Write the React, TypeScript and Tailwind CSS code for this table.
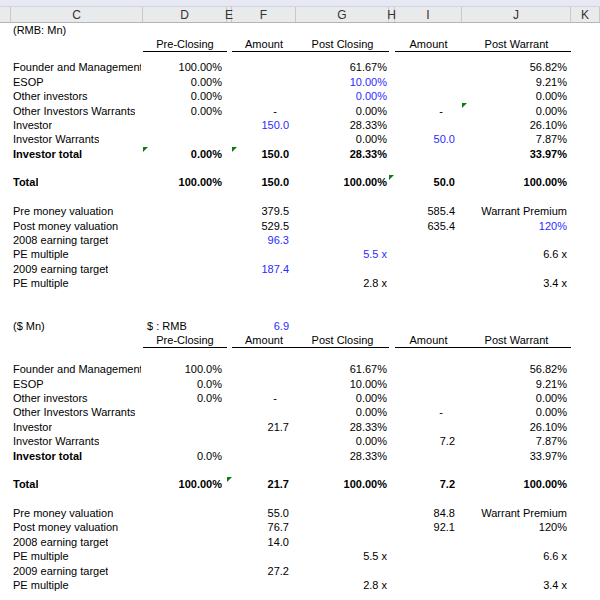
import React from "react";

type Col = "N" | "C" | "D" | "E" | "F" | "G" | "H" | "I" | "J" | "K";

type Cell = {
  t?: string;
  b?: boolean;
  blue?: boolean;
  tri?: boolean;
  al?: "l" | "r" | "c";
  pad?: string;
};

type Row = {
  cells?: Partial<Record<Col, Cell>>;
  h?: string;
  under?: boolean;
  bold?: boolean;
};

const COLS: Col[] = ["N", "C", "D", "E", "F", "G", "H", "I", "J", "K"];
const GRID = "grid grid-cols-[11px_132px_84px_5px_64px_93px_6px_67px_109px_29px]";

// default right padding per column (Excel number formats leave room for ")")
const PAD: Record<Col, string> = {
  N: "",
  C: "pl-[2px]",
  D: "pr-[5px]",
  E: "",
  F: "pr-[7px]",
  G: "pr-[2px]",
  H: "",
  I: "pr-[7px]",
  J: "pr-[4px]",
  K: "",
};

const UNDER: Col[] = ["D", "F", "G", "I", "J"];

const c = (t: string, extra: Partial<Cell> = {}): Cell => ({ t, ...extra });
const blue = (t: string): Cell => ({ t, blue: true });
const dash: Cell = { t: "-", pad: "pr-[19px]" };
const tri: Cell = { tri: true };

const headerRow: Row = {
  under: true,
  cells: {
    D: c("Pre-Closing", { al: "c", pad: "" }),
    F: c("Amount", { al: "c", pad: "" }),
    G: c("Post Closing", { al: "c", pad: "" }),
    I: c("Amount", { al: "c", pad: "" }),
    J: c("Post Warrant", { al: "c", pad: "" }),
  },
};

const blank: Row = {};

const rows: Row[] = [
  { cells: { C: c("(RMB: Mn)") } },
  headerRow,
  { h: "h-[8.55px]" },
  { cells: { C: c("Founder and Management"), D: c("100.00%"), G: c("61.67%"), J: c("56.82%") } },
  { cells: { C: c("ESOP"), D: c("0.00%"), G: blue("10.00%"), J: c("9.21%") } },
  { cells: { C: c("Other investors"), D: c("0.00%"), G: blue("0.00%"), J: c("0.00%") } },
  {
    cells: {
      C: c("Other Investors Warrants"),
      D: c("0.00%"),
      F: dash,
      G: c("0.00%"),
      I: dash,
      J: c("0.00%", { tri: true }),
    },
  },
  { cells: { C: c("Investor"), F: blue("150.0"), G: c("28.33%"), J: c("26.10%") } },
  { cells: { C: c("Investor Warrants"), G: c("0.00%"), I: blue("50.0"), J: c("7.87%") } },
  {
    bold: true,
    cells: {
      C: c("Investor total"),
      D: c("0.00%", { tri: true }),
      F: c("150.0", { tri: true }),
      G: c("28.33%"),
      J: c("33.97%"),
    },
  },
  blank,
  {
    bold: true,
    cells: {
      C: c("Total"),
      D: c("100.00%"),
      F: c("150.0"),
      G: c("100.00%"),
      H: tri,
      I: c("50.0"),
      J: c("100.00%"),
    },
  },
  blank,
  { cells: { C: c("Pre money valuation"), F: c("379.5"), I: c("585.4"), J: c("Warrant Premium") } },
  { cells: { C: c("Post money valuation"), F: c("529.5"), I: c("635.4"), J: blue("120%") } },
  { cells: { C: c("2008 earning target"), F: blue("96.3") } },
  { cells: { C: c("PE multiple"), G: blue("5.5 x"), J: c("6.6 x") } },
  { cells: { C: c("2009 earning target"), F: blue("187.4") } },
  { cells: { C: c("PE multiple"), G: c("2.8 x"), J: c("3.4 x") } },
  blank,
  blank,
  { cells: { C: c("($ Mn)"), D: c("$ : RMB", { al: "l", pad: "pl-[4px]" }), F: blue("6.9") } },
  headerRow,
  blank,
  { cells: { C: c("Founder and Management"), D: c("100.0%"), G: c("61.67%"), J: c("56.82%") } },
  { cells: { C: c("ESOP"), D: c("0.0%"), G: c("10.00%"), J: c("9.21%") } },
  { cells: { C: c("Other investors"), D: c("0.0%"), F: dash, G: c("0.00%"), J: c("0.00%") } },
  { cells: { C: c("Other Investors Warrants"), G: c("0.00%"), I: dash, J: c("0.00%") } },
  { cells: { C: c("Investor"), F: c("21.7"), G: c("28.33%"), J: c("26.10%") } },
  { cells: { C: c("Investor Warrants"), G: c("0.00%"), I: c("7.2"), J: c("7.87%") } },
  { cells: { C: c("Investor total", { b: true }), D: c("0.0%"), G: c("28.33%"), J: c("33.97%") } },
  blank,
  {
    bold: true,
    cells: {
      C: c("Total"),
      D: c("100.00%"),
      E: tri,
      F: c("21.7"),
      G: c("100.00%"),
      I: c("7.2"),
      J: c("100.00%"),
    },
  },
  blank,
  { cells: { C: c("Pre money valuation"), F: c("55.0"), I: c("84.8"), J: c("Warrant Premium") } },
  { cells: { C: c("Post money valuation"), F: c("76.7"), I: c("92.1"), J: c("120%") } },
  { cells: { C: c("2008 earning target"), F: c("14.0") } },
  { cells: { C: c("PE multiple"), G: c("5.5 x"), J: c("6.6 x") } },
  { cells: { C: c("2009 earning target"), F: c("27.2") } },
  { cells: { C: c("PE multiple"), G: c("2.8 x"), J: c("3.4 x") } },
  blank,
];

function SheetCell({ col, cell, row }: { col: Col; cell?: Cell; row: Row }) {
  const al = cell?.al ?? (col === "C" ? "l" : "r");
  const justify = al === "l" ? "justify-start" : al === "c" ? "justify-center" : "justify-end";
  const pad = cell?.pad ?? PAD[col];
  const bold = cell?.b || row.bold;
  const underline = row.under && UNDER.includes(col);
  return (
    <div
      className={`relative flex items-center overflow-hidden whitespace-nowrap ${justify} ${pad} ${
        bold ? "font-bold" : ""
      } ${cell?.blue ? "text-[#2b2bff]" : "text-black"} ${underline ? "border-b border-black" : ""}`}
    >
      {cell?.tri && (
        <span className="absolute left-0 top-0 h-0 w-0 border-r-[5px] border-t-[5px] border-r-transparent border-t-[#0a7d0a]" />
      )}
      {col === "C" ? (
        <span className="block max-w-[128px] overflow-hidden">{cell?.t}</span>
      ) : (
        cell?.t
      )}
    </div>
  );
}

function ColumnHeader() {
  return (
    <div>
      <div className="h-[7px] border-b border-[#d0d4de] bg-[#e6e9f1]" />
      <div className={`${GRID} h-[16px] border-b border-[#b4b4b4] bg-[#e9eaec] text-[#333]`}>
        {COLS.map((col) => (
          <div
            key={col}
            className="flex items-center justify-center overflow-visible border-r border-[#c8c8c8] text-[12px] leading-none"
          >
            {col === "N" ? "" : col}
          </div>
        ))}
      </div>
    </div>
  );
}

export default function App() {
  return (
    <div className="h-[600px] w-[600px] overflow-hidden bg-white font-['Liberation_Sans',Arial,sans-serif] text-[11px] leading-[14px]">
      <ColumnHeader />
      {rows.map((row, i) => (
        <div key={i} className={`${GRID} ${row.h ?? "h-[14.375px]"}`}>
          {COLS.map((col) => (
            <SheetCell key={col} col={col} cell={row.cells?.[col]} row={row} />
          ))}
        </div>
      ))}
    </div>
  );
}
